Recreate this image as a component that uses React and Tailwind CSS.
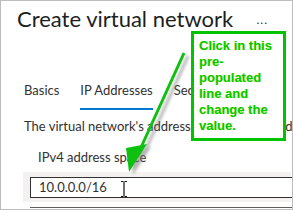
import React from 'react';

const segoe = { fontFamily: 'Lato, "Open Sans", sans-serif' };

function Callout() {
    return (
        <div className="absolute left-[190px] top-[30px] w-[95px] h-[110px] border-[3px] border-[#00c400] bg-white px-[5px] pt-[4px]">
            <p className="font-['Liberation_Sans',Arial,sans-serif] text-[13px] leading-[16px] font-bold text-[#00c800] whitespace-nowrap [text-shadow:0_0_1px_#e8f060]">
                Click in this<br />pre-<br />populated<br />line and<br />change the<br />value.
            </p>
        </div>
    );
}

function Arrow() {
    return (
        <svg className="absolute left-0 top-0" width="293" height="210" viewBox="0 0 293 210">
            <defs>
                <filter id="blur" x="-50%" y="-50%" width="200%" height="200%">
                    <feGaussianBlur stdDeviation="1.5" />
                </filter>
            </defs>
            <g filter="url(#blur)" opacity="0.55">
                <line x1="187" y1="55" x2="141" y2="157" stroke="#777" strokeWidth="3" />
                <polygon points="150,146 132,174 129,150" fill="#777" />
            </g>
            <line x1="183" y1="52" x2="137" y2="153" stroke="#10c010" strokeWidth="3" />
            <polygon points="146,143 128,171 125,147" fill="#10c010" />
        </svg>
    );
}

function TextCursor() {
    return (
        <svg className="absolute left-[89px] top-[3px]" width="8" height="16" viewBox="0 0 8 16">
            <path d="M1 0.5h2.5M4.5 0.5h2.5M1 15.5h2.5M4.5 15.5h2.5M4 1v14" stroke="#111" strokeWidth="1.2" fill="none" />
        </svg>
    );
}

export default function App() {
    return (
        <div className="relative w-[293px] h-[210px] overflow-hidden bg-white border border-[#bdbdbd] text-[#323130]" style={segoe}>
            <div className="flex items-start justify-between pl-[16px] pr-[24px] pt-[2px]">
                <h1 className="text-[22px] leading-[32px] text-[#201f1e] whitespace-nowrap">Create virtual network</h1>
                <span className="text-[12px] leading-[12px] mt-[11px] tracking-[1px]">...</span>
            </div>
            <div className="flex gap-[21px] pl-[23px] mt-[46px] text-[13px] leading-[18px] whitespace-nowrap">
                <span className="pb-[11px]">Basics</span>
                <span className="pb-[9px] border-b-2 border-[#0078d4]">IP Addresses</span>
                <span className="pb-[11px]">Security</span>
                <span className="pb-[11px]">Tags</span>
            </div>
            <p className="pl-[23px] mt-[7px] text-[13px] leading-[18px] whitespace-nowrap">
                The virtual network's address space is specified as one or more address prefixes
            </p>
            <p className="pl-[37px] mt-[13px] text-[13px] leading-[18px] whitespace-nowrap">IPv4 address space</p>
            <div className="ml-[22px] mr-[1px] mt-[6px] bg-[#f3f2f1] pt-[5px] pb-[4px] pl-[7px]">
                <div className="-mr-[3px] h-[21px] border border-[#323130] bg-white pl-[8px] flex items-center text-[13px] relative">
                    10.0.0.0/16
                    <TextCursor />
                </div>
            </div>
            <div className="ml-[29px] mt-[5px] h-[1px] bg-[#605e5c]" />
            <Arrow />
            <Callout />
        </div>
    );
}
